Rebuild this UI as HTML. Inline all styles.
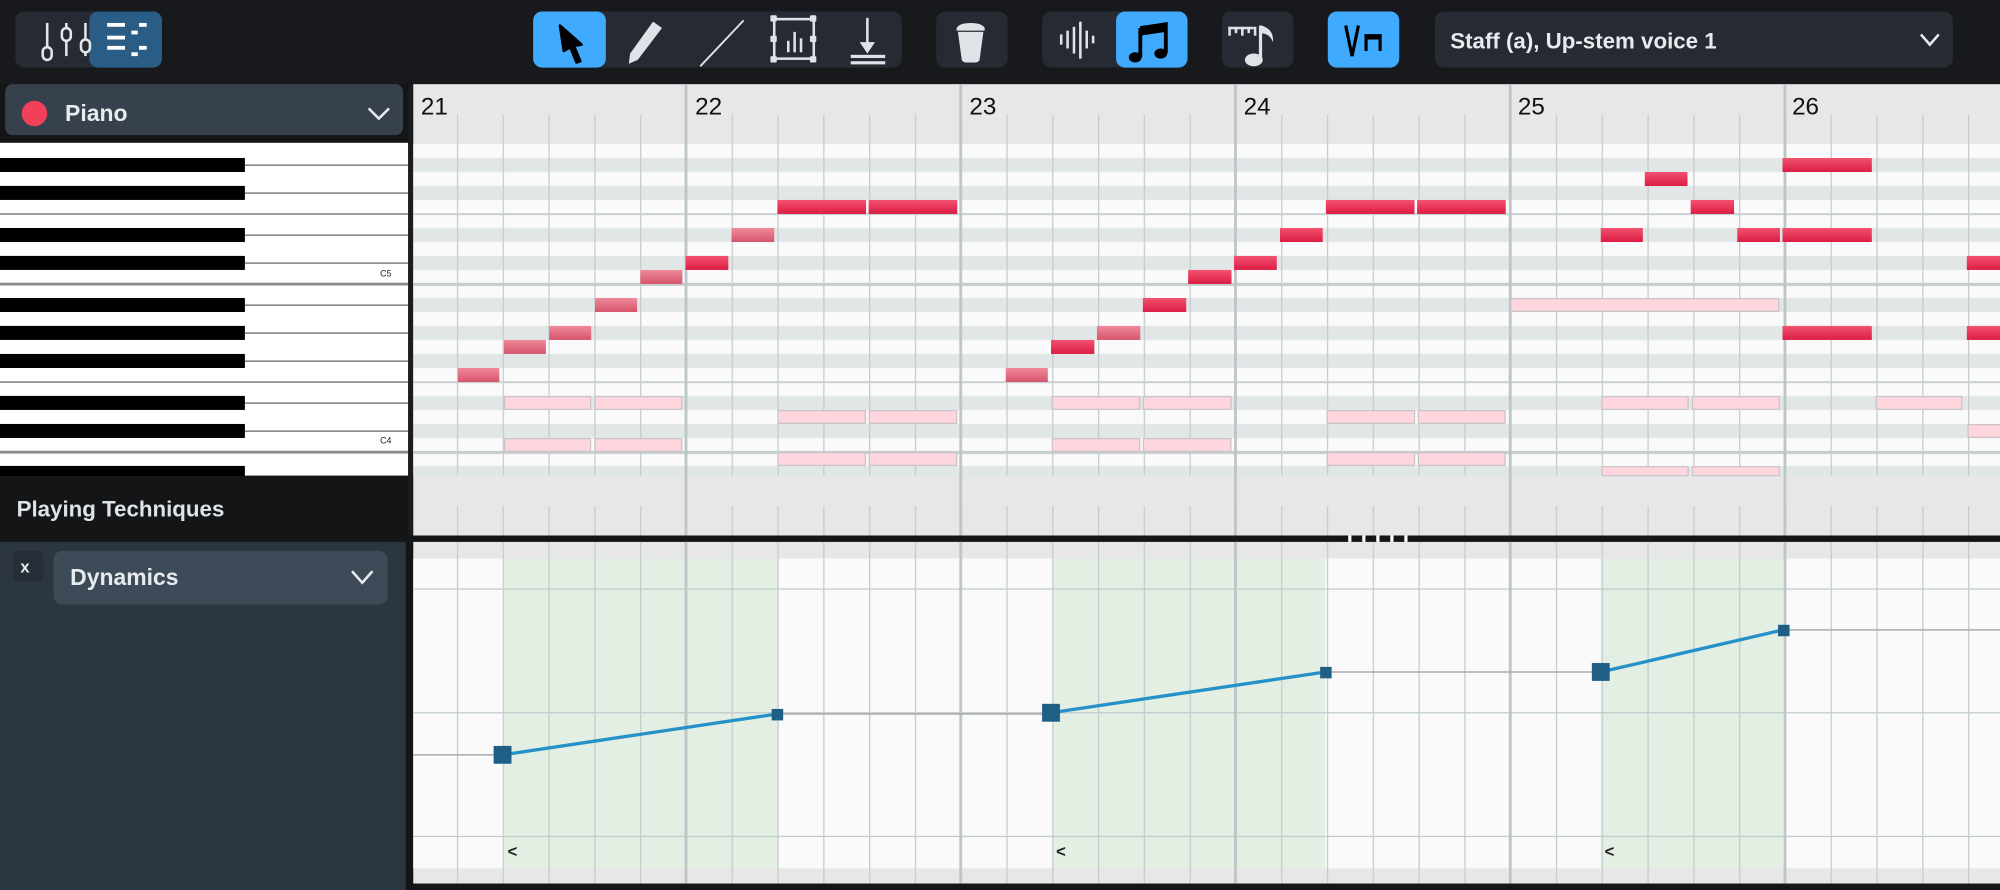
<!DOCTYPE html>
<html><head><meta charset="utf-8"><style>
html,body{margin:0;padding:0;background:#17191d;overflow:hidden}
svg{display:block}
text{font-family:"Liberation Sans",sans-serif}
</style></head><body>
<svg width="2000" height="890" viewBox="0 0 1568 698" preserveAspectRatio="none" xmlns="http://www.w3.org/2000/svg">
<defs>
<linearGradient id="n1" x1="0" y1="0" x2="0" y2="1"><stop offset="0" stop-color="#f08a9a"/><stop offset="1" stop-color="#d5546c"/></linearGradient>
<linearGradient id="n2" x1="0" y1="0" x2="0" y2="1"><stop offset="0" stop-color="#f25270"/><stop offset="1" stop-color="#dc1c44"/></linearGradient>
<pattern id="rows" patternUnits="userSpaceOnUse" x="0" y="112.9" width="20" height="131.76">
<rect width="20" height="131.76" fill="#fafafa"/>
<rect y="10.98" width="20" height="10.98" fill="#e1e6e6"/>
<rect y="32.94" width="20" height="10.98" fill="#e1e6e6"/>
<rect y="65.88" width="20" height="10.98" fill="#e1e6e6"/>
<rect y="87.84" width="20" height="10.98" fill="#e1e6e6"/>
<rect y="120.78" width="20" height="10.98" fill="#e1e6e6"/>
</pattern>
<pattern id="ticks" patternUnits="userSpaceOnUse" x="322.3" y="0" width="35.9" height="20">
<rect x="0" width="1" height="20" fill="#c4cccc"/>
</pattern>
<pattern id="bars" patternUnits="userSpaceOnUse" x="321.3" y="0" width="215.4" height="20">
<rect x="0" width="2.2" height="20" fill="#bcc6c6"/>
</pattern>
</defs>

<!-- toolbar -->
<rect width="1568" height="66" fill="#17191d"/>
<rect x="12" y="9" width="115" height="44" rx="7" fill="#262b33"/>
<rect x="70" y="9" width="57" height="44" rx="7" fill="#2a5d85"/>
<g stroke="#e2e6ea" stroke-width="2" fill="none">
<line x1="37" y1="18" x2="37" y2="44"/><line x1="52" y1="18" x2="52" y2="44"/><line x1="67" y1="18" x2="67" y2="44"/>
<rect x="33.5" y="37" width="7" height="10" rx="3.5" fill="#262b33"/><rect x="48.5" y="22" width="7" height="10" rx="3.5" fill="#262b33"/><rect x="63.5" y="31" width="7" height="10" rx="3.5" fill="#262b33"/>
</g>
<g fill="#fff">
<rect x="84" y="18" width="14" height="3"/><rect x="84" y="28" width="14" height="3"/><rect x="84" y="36" width="14" height="3"/>
<rect x="103" y="24" width="5" height="3"/><rect x="109" y="18" width="6" height="3"/><rect x="109" y="36" width="6" height="3"/><rect x="103" y="41" width="5" height="3"/>
</g>

<rect x="418" y="9" width="289" height="44" rx="7" fill="#262b33"/>
<rect x="418" y="9" width="57" height="44" rx="7" fill="#40aaff"/>
<path d="M439 20 L456 35 L450 36 L455 48 L452 49 L447 37 L442 40 Z" fill="#000" stroke="#000" stroke-width="2" stroke-linejoin="round"/>
<path d="M512 23 L519 28 L500 53 L493 56 L494 48 Z" fill="#dfe3e8" transform="translate(0,-6)"/>
<line x1="549" y1="49" x2="583" y2="13" stroke="#dfe3e8" stroke-width="1.5" transform="translate(0,3)"/>
<g fill="#dfe3e8"><rect x="606" y="14" width="2" height="33"/><rect x="637" y="14" width="2" height="33"/><rect x="606" y="14" width="33" height="2"/><rect x="606" y="45" width="33" height="2"/>
<rect x="604" y="12" width="5" height="5" rx="1"/><rect x="635" y="12" width="5" height="5" rx="1"/><rect x="604" y="44" width="5" height="5" rx="1"/><rect x="635" y="44" width="5" height="5" rx="1"/><rect x="604" y="28" width="5" height="5" rx="1"/><rect x="635" y="28" width="5" height="5" rx="1"/>
<rect x="617" y="32" width="2" height="9"/><rect x="622" y="25" width="2" height="16"/><rect x="627" y="30" width="2" height="11"/>
<rect x="679" y="14" width="2" height="22"/><path d="M674 33 L686 33 L680 42 Z"/><rect x="667" y="43" width="27" height="2.5"/><rect x="667" y="48" width="27" height="2.5"/></g>

<rect x="734" y="9" width="56" height="44" rx="7" fill="#262b33"/>
<path d="M751 25 L771 25 L768 47 Q767 49 765 49 L757 49 Q755 49 754 47 Z M750 22 Q752 18 761 18 Q770 18 772 22 L772 24 L750 24 Z" fill="#dfe3e8"/>

<rect x="817" y="9" width="114" height="44" rx="7" fill="#262b33"/>
<g stroke="#dfe3e8" stroke-width="2"><line x1="832" y1="27" x2="832" y2="35"/><line x1="837" y1="24" x2="837" y2="38"/><line x1="842" y1="21" x2="842" y2="42"/><line x1="847" y1="17" x2="847" y2="46"/><line x1="852" y1="24" x2="852" y2="38"/><line x1="857" y1="28" x2="857" y2="34"/></g>
<rect x="875" y="9" width="56" height="44" rx="7" fill="#40aaff"/>
<path d="M894 22 L914 19 L914 42 M894 22 L894 45" stroke="#000" stroke-width="3" fill="none"/><path d="M894 22 L914 19 L914 25 L894 28Z" fill="#000"/>
<ellipse cx="890" cy="45" rx="5" ry="4" fill="#000"/><ellipse cx="910" cy="42" rx="5" ry="4" fill="#000"/>

<rect x="958" y="9" width="56" height="44" rx="7" fill="#262b33"/>
<g fill="#dfe3e8"><rect x="963" y="21" width="20" height="2"/><rect x="963" y="21" width="2" height="7"/><rect x="968" y="21" width="2" height="5"/><rect x="973" y="21" width="2" height="7"/><rect x="978" y="21" width="2" height="5"/><rect x="983" y="21" width="2" height="7"/>
<rect x="987" y="20" width="2.5" height="27"/><path d="M989 20 Q999 23 998 33 Q996 27 989 26 Z"/><ellipse cx="983" cy="47" rx="7" ry="5"/></g>

<rect x="1041" y="9" width="56" height="44" rx="7" fill="#40aaff"/>
<path d="M1055 20 L1060 44 L1065 20" stroke="#000" stroke-width="2.5" fill="none"/>
<path d="M1071 40 L1071 28 L1082 28 L1082 40" stroke="#000" stroke-width="2.5" fill="none"/><rect x="1070" y="27" width="13" height="4" fill="#000"/>

<rect x="1125" y="9" width="406" height="44" rx="7" fill="#262b33"/>
<text x="1137" y="38" font-size="17.5" font-weight="bold" fill="#e8ebee">Staff (a), Up-stem voice 1</text>
<path d="M1506 27 L1513 35 L1520 27" stroke="#e8ebee" stroke-width="2" fill="none"/>

<!-- left top panel -->
<rect x="0" y="66" width="324" height="632" fill="#141517"/>
<rect x="4" y="66" width="312" height="40" rx="6" fill="#37414d"/>
<circle cx="27" cy="89" r="10" fill="#f0405a"/>
<text x="51" y="95" font-size="18" font-weight="bold" fill="#e8ebee">Piano</text>
<path d="M289 85 L297 93 L305 85" stroke="#e8ebee" stroke-width="2" fill="none"/>

<!-- keyboard -->
<rect x="0" y="112" width="320" height="261" fill="#fff"/>
<g fill="#000">
<rect x="0" y="123.9" width="192" height="11"/><rect x="0" y="145.8" width="192" height="11"/><rect x="0" y="178.8" width="192" height="11"/><rect x="0" y="200.7" width="192" height="11"/><rect x="0" y="233.7" width="192" height="11"/><rect x="0" y="255.6" width="192" height="11"/><rect x="0" y="277.6" width="192" height="11"/><rect x="0" y="310.5" width="192" height="11"/><rect x="0" y="332.5" width="192" height="11"/><rect x="0" y="365.4" width="192" height="8"/>
</g>
<g fill="#8a8a8a">
<rect x="192" y="128.9" width="128" height="1.3"/><rect x="192" y="150.8" width="128" height="1.3"/><rect x="192" y="183.8" width="128" height="1.3"/><rect x="192" y="205.7" width="128" height="1.3"/><rect x="192" y="238.7" width="128" height="1.3"/><rect x="192" y="260.6" width="128" height="1.3"/><rect x="192" y="282.6" width="128" height="1.3"/><rect x="192" y="315.5" width="128" height="1.3"/><rect x="192" y="337.5" width="128" height="1.3"/>
<rect x="0" y="167.2" width="320" height="1.3"/><rect x="0" y="221.7" width="320" height="2.2"/><rect x="0" y="299" width="320" height="1.3"/><rect x="0" y="353.5" width="320" height="2.2"/>
</g>
<text x="298" y="217" font-size="7" fill="#222">C5</text>
<text x="298" y="348" font-size="7" fill="#222">C4</text>
<rect x="320" y="66" width="4" height="359" fill="#1a1c1e"/>
<text x="13" y="405" font-size="17.5" font-weight="bold" fill="#dfe3e8">Playing Techniques</text>

<!-- grid top -->
<rect x="324" y="66" width="1244" height="354" fill="#e7e7e7"/>
<rect x="324" y="112.9" width="1244" height="260" fill="url(#rows)"/>
<rect x="324" y="90" width="1244" height="283" fill="url(#ticks)"/>
<rect x="324" y="397" width="1244" height="23" fill="url(#ticks)"/>
<g fill="#c8cfcf"><rect x="324" y="167.2" width="1244" height="1.5"/><rect x="324" y="221.8" width="1244" height="2.5"/><rect x="324" y="299" width="1244" height="1.5"/><rect x="324" y="353.6" width="1244" height="2.5"/></g>
<rect x="324" y="66" width="1244" height="354" fill="url(#bars)"/>
<g font-size="19" fill="#111"><text x="330" y="90">21</text><text x="545" y="90">22</text><text x="760" y="90">23</text><text x="975" y="90">24</text><text x="1190" y="90">25</text><text x="1405" y="90">26</text></g>

<!-- pink notes -->
<g fill="#ffd6de" stroke="#c9c4c6" stroke-width="1">
<rect x="395.5" y="311" width="67.5" height="10"/><rect x="466.5" y="311" width="68" height="10"/>
<rect x="395.5" y="344" width="67.5" height="10"/><rect x="466.5" y="344" width="68" height="10"/>
<rect x="610" y="322" width="68.5" height="10"/><rect x="681.5" y="322" width="68.5" height="10"/>
<rect x="610" y="355" width="68.5" height="10"/><rect x="681.5" y="355" width="68.5" height="10"/>
<rect x="825" y="311" width="68.5" height="10"/><rect x="896.5" y="311" width="68.5" height="10"/>
<rect x="825" y="344" width="68.5" height="10"/><rect x="896.5" y="344" width="68.5" height="10"/>
<rect x="1040.5" y="322" width="68.5" height="10"/><rect x="1112" y="322" width="68" height="10"/>
<rect x="1040.5" y="355" width="68.5" height="10"/><rect x="1112" y="355" width="68" height="10"/>
<rect x="1184.5" y="234.2" width="210" height="10"/>
<rect x="1256" y="311" width="67.5" height="10"/><rect x="1327" y="311" width="68" height="10"/>
<rect x="1256" y="366" width="67.5" height="7"/><rect x="1327" y="366" width="68" height="7"/>
<rect x="1471" y="311" width="67" height="10"/><rect x="1543" y="333" width="30" height="10"/>
</g>
<!-- melody notes -->
<g fill="url(#n1)">
<rect x="359" y="288.6" width="32.5" height="11"/><rect x="395" y="266.6" width="33" height="11"/><rect x="430.5" y="255.6" width="33" height="11"/><rect x="466.5" y="233.7" width="33" height="11"/><rect x="502" y="211.7" width="33" height="11"/>
<rect x="573.5" y="178.8" width="33.5" height="11"/>
<rect x="788.5" y="288.6" width="33" height="11"/><rect x="860" y="255.6" width="34" height="11"/>
</g>
<g fill="url(#n2)">
<rect x="537.5" y="200.7" width="33.5" height="11"/>
<rect x="609.5" y="156.8" width="69.5" height="11"/><rect x="681" y="156.8" width="69.5" height="11"/>
<rect x="824" y="266.6" width="34" height="11"/><rect x="896" y="233.7" width="34" height="11"/><rect x="931.5" y="211.7" width="34" height="11"/>
<rect x="967.5" y="200.7" width="33.5" height="11"/><rect x="1003.5" y="178.8" width="33.5" height="11"/>
<rect x="1039.5" y="156.8" width="69.5" height="11"/><rect x="1111" y="156.8" width="69.5" height="11"/>
<rect x="1289.5" y="134.9" width="33.5" height="11"/><rect x="1325.5" y="156.8" width="34" height="11"/>
<rect x="1255" y="178.8" width="33" height="11"/><rect x="1362" y="178.8" width="33.5" height="11"/>
<rect x="1397.5" y="123.9" width="70" height="11"/><rect x="1397.5" y="178.8" width="70" height="11"/><rect x="1397.5" y="255.6" width="70" height="11"/>
<rect x="1542" y="200.7" width="30" height="11"/><rect x="1542" y="255.6" width="30" height="11"/>
</g>

<!-- splitter -->
<rect x="320" y="420" width="1248" height="5" fill="#141517"/>
<g fill="#ffffff"><rect x="1057" y="420" width="2.5" height="5"/><rect x="1068" y="420" width="2.5" height="5"/><rect x="1079" y="420" width="2.5" height="5"/><rect x="1090" y="420" width="2.5" height="5"/><rect x="1101" y="420" width="2.5" height="5"/></g>

<!-- lower panel -->
<rect x="0" y="425" width="320" height="273" fill="#2c3640"/>
<rect x="10" y="432" width="24" height="24" rx="4" fill="#252d36"/>
<text x="16" y="449" font-size="13" font-weight="bold" fill="#e8ebee">x</text>
<rect x="42" y="432" width="262" height="42" rx="7" fill="#3d4a57"/>
<text x="55" y="459" font-size="18" font-weight="bold" fill="#e8ebee">Dynamics</text>
<path d="M276 448 L284 457 L292 448" stroke="#e8ebee" stroke-width="2" fill="none"/>
<rect x="318" y="425" width="6" height="273" fill="#141517"/>

<rect x="324" y="425" width="1244" height="268" fill="#e7e7e7"/>
<rect x="324" y="438" width="1244" height="243" fill="#fafafa"/>
<g fill="#e3efe3"><rect x="395" y="438" width="215" height="243"/><rect x="825" y="438" width="214" height="243"/><rect x="1255" y="438" width="143" height="243"/></g>
<g fill="#c0cccc"><rect x="324" y="461.5" width="1244" height="1"/><rect x="324" y="558.5" width="1244" height="1"/><rect x="324" y="655.5" width="1244" height="1"/></g>
<rect x="324" y="425" width="1244" height="268" fill="url(#ticks)"/>
<rect x="324" y="425" width="1244" height="268" fill="url(#bars)"/>
<rect x="320" y="693" width="1248" height="5" fill="#141517"/>

<g stroke="#aaaaaa" stroke-width="1.2"><line x1="324" y1="592" x2="394" y2="592"/><line x1="609" y1="560" x2="824" y2="560"/><line x1="1039" y1="527" x2="1255" y2="527"/><line x1="1398" y1="494" x2="1568" y2="494"/></g>
<g stroke="#2591c8" stroke-width="2.6"><line x1="394" y1="592" x2="609" y2="560"/><line x1="824" y1="559" x2="1039" y2="527"/><line x1="1255" y1="527" x2="1398" y2="494"/></g>
<g fill="#1f5f85"><rect x="387" y="585" width="14" height="14"/><rect x="817" y="552" width="14" height="14"/><rect x="1248" y="520" width="14" height="14"/>
<rect x="605" y="556" width="9" height="9"/><rect x="1035" y="523" width="9" height="9"/><rect x="1394" y="490" width="9" height="9"/></g>
<g font-size="13" font-weight="bold" fill="#222"><text x="398" y="672">&lt;</text><text x="828" y="672">&lt;</text><text x="1258" y="672">&lt;</text></g>
</svg>
</body></html>
